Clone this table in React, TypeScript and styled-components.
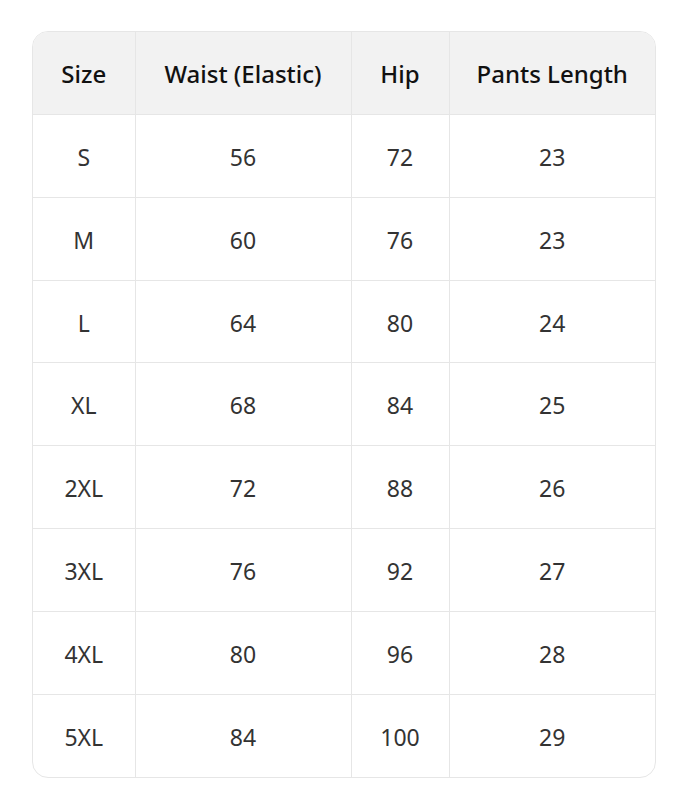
import styled, { createGlobalStyle } from "styled-components";

const GlobalStyle = createGlobalStyle`
  html, body {
    margin: 0;
    padding: 0;
    background: #ffffff;
  }
  body {
    padding: 31px 32px;
    font-family: "Segoe UI", "Noto Sans", "Open Sans", sans-serif;
  }
`;

const TableCard = styled.div`
  width: 624px;
  box-sizing: border-box;
  border: 1px solid #e6e6e6;
  border-radius: 16px;
  overflow: hidden;
`;

const Table = styled.table`
  width: 100%;
  border-collapse: collapse;
  table-layout: fixed;
`;

const HeadCell = styled.th`
  height: 79.86px;
  padding: 2px 0 0;
  background: #f2f2f2;
  color: #111111;
  font-size: 24px;
  font-weight: 500;
  text-align: center;
  border-right: 1px solid #e6e6e6;
  border-bottom: 1px solid #e6e6e6;
  &:last-child {
    border-right: none;
  }
`;

const Row = styled.tr`
  &:last-child td {
    border-bottom: none;
  }
`;

const Cell = styled.td`
  height: 79.86px;
  padding: 2px 0 0;
  color: #333333;
  font-size: 23px;
  font-weight: 400;
  text-align: center;
  border-right: 1px solid #e6e6e6;
  border-bottom: 1px solid #e6e6e6;
  &:last-child {
    border-right: none;
  }
`;

const columns = [
  { label: "Size", width: 102 },
  { label: "Waist (Elastic)", width: 216 },
  { label: "Hip", width: 98 },
  { label: "Pants Length", width: 206 },
];

const rows = [
  ["S", "56", "72", "23"],
  ["M", "60", "76", "23"],
  ["L", "64", "80", "24"],
  ["XL", "68", "84", "25"],
  ["2XL", "72", "88", "26"],
  ["3XL", "76", "92", "27"],
  ["4XL", "80", "96", "28"],
  ["5XL", "84", "100", "29"],
];

export default function App() {
  return (
    <>
      <GlobalStyle />
      <TableCard>
        <Table>
          <colgroup>
            {columns.map((c) => (
              <col key={c.label} style={{ width: c.width }} />
            ))}
          </colgroup>
          <thead>
            <tr>
              {columns.map((c) => (
                <HeadCell key={c.label}>{c.label}</HeadCell>
              ))}
            </tr>
          </thead>
          <tbody>
            {rows.map((r) => (
              <Row key={r[0]}>
                {r.map((v, i) => (
                  <Cell key={i}>{v}</Cell>
                ))}
              </Row>
            ))}
          </tbody>
        </Table>
      </TableCard>
    </>
  );
}
